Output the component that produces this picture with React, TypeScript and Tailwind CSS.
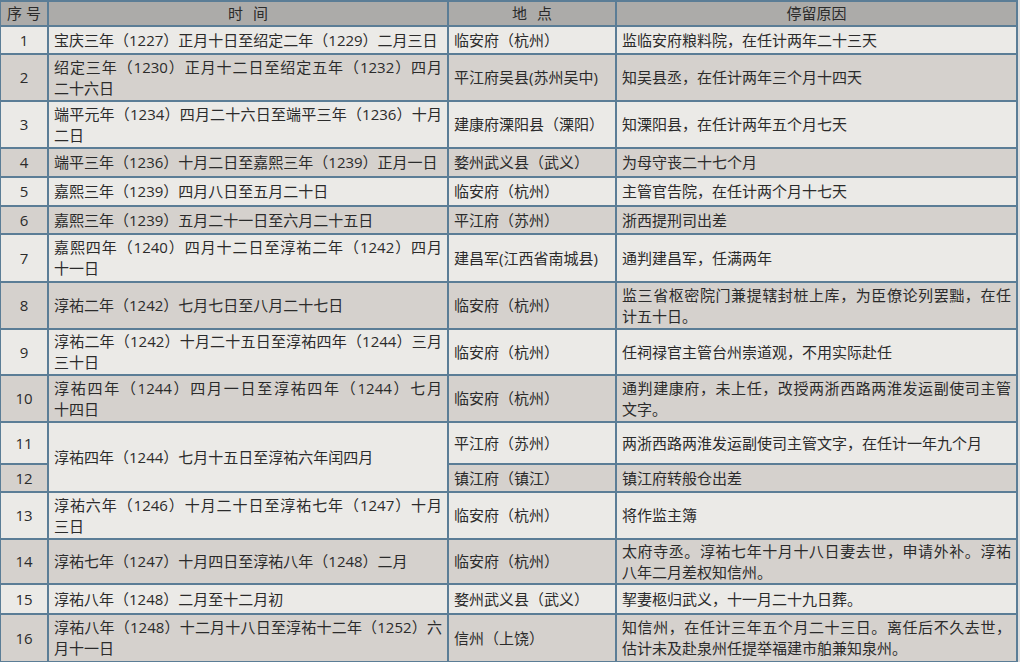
type Row = {
  no: string
  h: string
  dark: boolean
  time: string[] | null
  span?: boolean
  place: string
  reason: string[]
}

const rows: Row[] = [
  { no: "1", h: "h-[28px]", dark: false, time: ["宝庆三年（1227）正月十日至绍定二年（1229）二月三日"], place: "临安府（杭州）", reason: ["监临安府粮料院，在任计两年二十三天"] },
  { no: "2", h: "h-[47px]", dark: true, time: ["绍定三年（1230）正月十二日至绍定五年（1232）四月", "二十六日"], place: "平江府吴县(苏州吴中)", reason: ["知吴县丞，在任计两年三个月十四天"] },
  { no: "3", h: "h-[47px]", dark: false, time: ["端平元年（1234）四月二十六日至端平三年（1236）十月", "二日"], place: "建康府溧阳县（溧阳）", reason: ["知溧阳县，在任计两年五个月七天"] },
  { no: "4", h: "h-[29px]", dark: true, time: ["端平三年（1236）十月二日至嘉熙三年（1239）正月一日"], place: "婺州武义县（武义）", reason: ["为母守丧二十七个月"] },
  { no: "5", h: "h-[29px]", dark: false, time: ["嘉熙三年（1239）四月八日至五月二十日"], place: "临安府（杭州）", reason: ["主管官告院，在任计两个月十七天"] },
  { no: "6", h: "h-[28px]", dark: true, time: ["嘉熙三年（1239）五月二十一日至六月二十五日"], place: "平江府（苏州）", reason: ["浙西提刑司出差"] },
  { no: "7", h: "h-[48px]", dark: false, time: ["嘉熙四年（1240）四月十二日至淳祐二年（1242）四月", "十一日"], place: "建昌军(江西省南城县)", reason: ["通判建昌军，任满两年"] },
  { no: "8", h: "h-[47px]", dark: true, time: ["淳祐二年（1242）七月七日至八月二十七日"], place: "临安府（杭州）", reason: ["监三省枢密院门兼提辖封桩上库，为臣僚论列罢黜，在任", "计五十日。"] },
  { no: "9", h: "h-[46px]", dark: false, time: ["淳祐二年（1242）十月二十五日至淳祐四年（1244）三月", "三十日"], place: "临安府（杭州）", reason: ["任祠禄官主管台州崇道观，不用实际赴任"] },
  { no: "10", h: "h-[47px]", dark: true, time: ["淳祐四年（1244）四月一日至淳祐四年（1244）七月", "十四日"], place: "临安府（杭州）", reason: ["通判建康府，未上任，改授两浙西路两淮发运副使司主管", "文字。"] },
  { no: "11", h: "h-[42px]", dark: false, time: ["淳祐四年（1244）七月十五日至淳祐六年闰四月"], span: true, place: "平江府（苏州）", reason: ["两浙西路两淮发运副使司主管文字，在任计一年九个月"] },
  { no: "12", h: "h-[28px]", dark: true, time: null, place: "镇江府（镇江）", reason: ["镇江府转般仓出差"] },
  { no: "13", h: "h-[47px]", dark: false, time: ["淳祐六年（1246）十月二十日至淳祐七年（1247）十月", "三日"], place: "临安府（杭州）", reason: ["将作监主簿"] },
  { no: "14", h: "h-[45px]", dark: true, time: ["淳祐七年（1247）十月四日至淳祐八年（1248）二月"], place: "临安府（杭州）", reason: ["太府寺丞。淳祐七年十月十八日妻去世，申请外补。淳祐", "八年二月差权知信州。"] },
  { no: "15", h: "h-[30px]", dark: false, time: ["淳祐八年（1248）二月至十二月初"], place: "婺州武义县（武义）", reason: ["挈妻柩归武义，十一月二十九日葬。"] },
  { no: "16", h: "h-[48px]", dark: true, time: ["淳祐八年（1248）十二月十八日至淳祐十二年（1252）六", "月十一日"], place: "信州（上饶）", reason: ["知信州，在任计三年五个月二十三日。离任后不久去世，", "估计未及赴泉州任提举福建市舶兼知泉州。"] },
]

const cell = "border-2 border-[#5b7d96] px-[5px] py-0 align-middle"

// every line except the last is stretched to the full cell width
function Lines({ lines }: { lines: string[] }) {
  return (
    <>
      {lines.map((l, i) => (
        <div
          key={i}
          className={
            i < lines.length - 1
              ? "whitespace-nowrap text-justify [text-align-last:justify]"
              : "whitespace-nowrap"
          }
        >
          {l}
        </div>
      ))}
    </>
  )
}

export default function App() {
  return (
    <div className="w-[1020px] h-[662px] overflow-hidden bg-[#dedede] font-['Open_Sans','Noto_Sans_CJK_SC',sans-serif] text-[15px] leading-[21px] text-[#2b2b2b]">
      <table className="table-fixed border-collapse w-[1017px] -ml-[1px]">
        <colgroup>
          <col className="w-[48px]" />
          <col className="w-[400px]" />
          <col className="w-[168px]" />
          <col className="w-[401px]" />
        </colgroup>
        <thead>
          <tr className="h-[25px] bg-[#acaba9]">
            <th className={cell + " text-center font-normal"}>序 号</th>
            <th className={cell + " text-center font-normal"}>时{"\u2002\u2009"}间</th>
            <th className={cell + " text-center font-normal"}>地{"\u2002\u2009"}点</th>
            <th className={cell + " text-center font-normal"}>停留原因</th>
          </tr>
        </thead>
        <tbody>
          {rows.map((r) => (
            <tr key={r.no} className={r.h + " " + (r.dark ? "bg-[#d5d1cd]" : "bg-[#ebeae7]")}>
              <td className={cell + " text-center"}>{r.no}</td>
              {r.time !== null && (
                <td rowSpan={r.span ? 2 : 1} className={cell + (r.dark ? " bg-[#d5d1cd]" : " bg-[#ebeae7]")}>
                  <Lines lines={r.time} />
                </td>
              )}
              <td className={cell + " whitespace-nowrap"}>{r.place}</td>
              <td className={cell}>
                <Lines lines={r.reason} />
              </td>
            </tr>
          ))}
        </tbody>
      </table>
    </div>
  )
}
